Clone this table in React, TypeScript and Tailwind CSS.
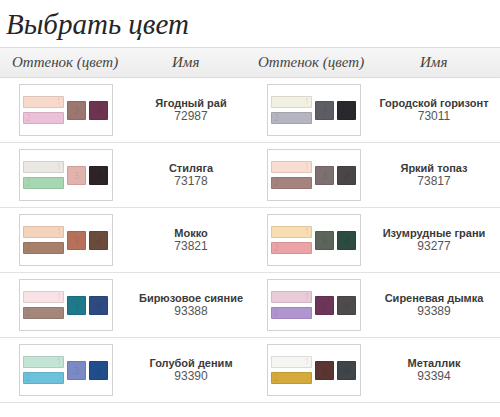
import React from "react";

interface Shade {
  name: string;
  code: string;
  colors: [string, string, string, string];
}

const leftShades: Shade[] = [
  { name: "Ягодный рай", code: "72987", colors: ["#f8dacd", "#ecc0d9", "#9b776f", "#6d3451"] },
  { name: "Стиляга", code: "73178", colors: ["#ebe7e3", "#a7d7b0", "#e2b3ad", "#2e2327"] },
  { name: "Мокко", code: "73821", colors: ["#f5d4be", "#a7806b", "#b7705a", "#6b4b3b"] },
  { name: "Бирюзовое сияние", code: "93388", colors: ["#f7e2e5", "#a3877d", "#1f798b", "#2d4b80"] },
  { name: "Голубой деним", code: "93390", colors: ["#c2e5d5", "#6cc1dc", "#7b89c5", "#1f4e8b"] },
];

const rightShades: Shade[] = [
  { name: "Городской горизонт", code: "73011", colors: ["#f2f0e1", "#b5b5c1", "#5d5d65", "#29292d"] },
  { name: "Яркий топаз", code: "73817", colors: ["#f9ddd3", "#a48381", "#7e6f71", "#4a4547"] },
  { name: "Изумрудные грани", code: "93277", colors: ["#f9ddb2", "#eba3a5", "#5b6559", "#2c4b41"] },
  { name: "Сиреневая дымка", code: "93389", colors: ["#e7cbd9", "#b195d1", "#6d3559", "#4f4b4d"] },
  { name: "Металлик", code: "93394", colors: ["#f5f5f1", "#d5a93b", "#5b3531", "#3f4549"] },
];

const Palette = ({ colors }: { colors: Shade["colors"] }) => (
  <div className="w-[94px] h-[52px] shrink-0 border border-[#d2d2d2] bg-white flex items-center pl-[3px]">
    <div className="flex flex-col gap-[4px]">
      <div
        className="w-[41px] h-[12px] rounded-[1px] border border-black/10 text-[8px] leading-[10px] text-black/10 text-right pr-[2px]"
        style={{ backgroundColor: colors[0] }}
      >
        1
      </div>
      <div
        className="w-[41px] h-[12px] rounded-[1px] border border-black/10 text-[8px] leading-[10px] text-black/10 pl-[2px]"
        style={{ backgroundColor: colors[1] }}
      >
        2
      </div>
    </div>
    <div
      className="ml-[3px] w-[19px] h-[19px] rounded-[1px] border border-black/10 text-[9px] leading-[17px] text-black/10 text-center"
      style={{ backgroundColor: colors[2] }}
    >
      3
    </div>
    <div
      className="ml-[3px] w-[19px] h-[19px] rounded-[1px] border border-black/10 text-[9px] leading-[17px] text-black/10 text-center"
      style={{ backgroundColor: colors[3] }}
    >
      4
    </div>
  </div>
);

const ShadeCell = ({ shade, side }: { shade: Shade; side: "left" | "right" }) => (
  <div className={`h-[64px] flex items-center ${side === "left" ? "pl-[19px]" : "pl-[17px]"}`}>
    <Palette colors={shade.colors} />
    <div
      className={`flex-1 text-center text-[11px] leading-[13px] ${side === "left" ? "ml-[19px]" : "ml-[7px]"}`}
      style={{ fontFamily: "'Liberation Sans', Arial, sans-serif" }}
    >
      <div className="font-bold text-[#3a3a3a]">{shade.name}</div>
      <div className="text-[12px] text-[#555]">{shade.code}</div>
    </div>
  </div>
);

const App = () => {
  const serif = { fontFamily: "'Liberation Serif', 'Times New Roman', serif" };

  return (
    <div className="w-[500px] h-[417px] bg-white overflow-hidden">
      <div className="h-[47px] pl-[6px] pt-[9px]">
        <h1 className="italic text-[29px] leading-[30px] text-[#262626]" style={serif}>
          Выбрать цвет
        </h1>
      </div>

      <div
        className="h-[31px] grid grid-cols-2 border-t border-b border-[#dcdcdc] bg-gradient-to-b from-[#f6f6f6] to-[#ececec] italic text-[15px] text-[#444]"
        style={serif}
      >
        <div className="flex items-center pl-[12px]">
          <span className="w-[160px]">Оттенок (цвет)</span>
          <span>Имя</span>
        </div>
        <div className="flex items-center pl-[8px]">
          <span className="w-[162px]">Оттенок (цвет)</span>
          <span>Имя</span>
        </div>
      </div>

      {leftShades.map((shade, i) => (
        <div key={shade.code} className="grid grid-cols-2 border-b border-[#e2e2e2]">
          <ShadeCell shade={shade} side="left" />
          <ShadeCell shade={rightShades[i]} side="right" />
        </div>
      ))}
    </div>
  );
};

export default App;
